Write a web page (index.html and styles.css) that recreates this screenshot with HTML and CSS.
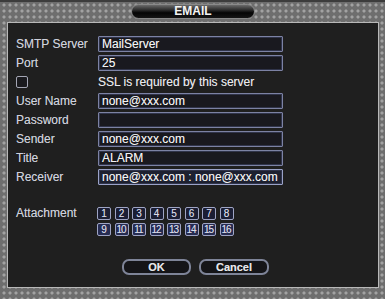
FILE: index.html
```html
<!DOCTYPE html>
<html>
<head>
<meta charset="utf-8">
<link rel="stylesheet" href="styles.css">
</head>
<body>
<div class="frame">
  <div class="tab">EMAIL</div>
  <div class="panel">
    <div class="form">
      <span class="label">SMTP Server</span><div class="field">MailServer</div>
      <span class="label">Port</span><div class="field">25</div>
      <span class="label"><span class="checkbox"></span></span><div class="note">SSL is required by this server</div>
      <span class="label">User Name</span><div class="field">none@xxx.com</div>
      <span class="label">Password</span><div class="field"></div>
      <span class="label">Sender</span><div class="field">none@xxx.com</div>
      <span class="label">Title</span><div class="field">ALARM</div>
      <span class="label">Receiver</span><div class="field active">none@xxx.com : none@xxx.com</div>
    </div>
    <div class="attach">
      <span class="attach-label">Attachment</span>
      <div class="channels">
        <div class="chrow">
          <span class="ch">1</span><span class="ch">2</span><span class="ch">3</span><span class="ch">4</span><span class="ch">5</span><span class="ch">6</span><span class="ch">7</span><span class="ch">8</span>
        </div>
        <div class="chrow sel">
          <span class="ch">9</span><span class="ch">10</span><span class="ch">11</span><span class="ch">12</span><span class="ch">13</span><span class="ch">14</span><span class="ch">15</span><span class="ch">16</span>
        </div>
      </div>
    </div>
    <div class="buttons">
      <span class="btn ok">OK</span><span class="btn cancel">Cancel</span>
    </div>
  </div>
</div>
</body>
</html>
```
FILE: styles.css
```css
html, body {
  margin: 0;
  padding: 0;
  background: #2a2a2a;
}
body {
  font-family: "Liberation Sans", Arial, sans-serif;
  font-size: 12px;
}
.frame {
  position: relative;
  box-sizing: border-box;
  width: 385px;
  height: 299px;
  padding: 20px 6px 10px 7px;
  border-top: 2px solid #3c3c3c;
  background-color: #6e6e6e;
  background-image: radial-gradient(circle, #a2a2a2 1.2px, rgba(162,162,162,0) 1.9px);
  background-size: 6px 6px;
  background-position: 1px 0px;
}
.tab {
  position: absolute;
  left: 131px;
  top: 2px;
  width: 124px;
  height: 15px;
  box-sizing: border-box;
  border-radius: 8px;
  border: 1px solid #8a8a8a;
  background: linear-gradient(#6a6a6a 0%, #2a2a2a 40%, #050505 60%, #151515 100%);
  color: #f4f4f4;
  font-weight: bold;
  font-size: 12px;
  line-height: 13px;
  text-align: center;
}
.panel {
  box-sizing: border-box;
  height: 266px;
  border: 1px solid #b8b8b8;
  background: #1f1f1f;
  padding: 13px 0 0 8px;
  text-shadow: 0 0 0.6px rgba(255,255,255,0.45);
}
.form {
  display: grid;
  grid-template-columns: 82px 185px;
  grid-auto-rows: 16px;
  row-gap: 3px;
}
.label {
  color: #cdd0dc;
  line-height: 16px;
  display: flex;
  align-items: center;
}
.checkbox {
  display: block;
  width: 10px;
  height: 10px;
  border: 1px solid #a4a6b4;
  border-radius: 2px;
  background: #1a1a1e;
}
.field {
  box-sizing: border-box;
  height: 16px;
  border: 1px solid #7c82a4;
  box-shadow: inset 0 0 0 1px #30344a;
  background: #19191f;
  color: #f2f2f2;
  line-height: 14px;
  padding-left: 3px;
  white-space: nowrap;
  overflow: hidden;
  border-radius: 1px;
}
.field.active {
  border-color: #9aa2c8;
  background: #1d2030;
}
.note {
  color: #e8e8ec;
  line-height: 16px;
  white-space: nowrap;
}
.attach {
  display: flex;
  margin-top: 22px;
  align-items: flex-start;
}
.attach-label {
  width: 81px;
  color: #cdd0dc;
  line-height: 13px;
}
.channels {
  display: flex;
  flex-direction: column;
  gap: 3px;
}
.chrow {
  display: flex;
  gap: 3.5px;
}
.ch {
  box-sizing: border-box;
  width: 14px;
  height: 13px;
  border: 1px solid #9ea4c4;
  border-radius: 2px;
  background: #1b1e34;
  color: #d8dae8;
  font-size: 10px;
  line-height: 11px;
  text-align: center;
  letter-spacing: -1px;
  text-indent: -1px;
  overflow: hidden;
}
.sel .ch {
  background: #262c52;
}
.buttons {
  display: flex;
  gap: 8px;
  margin-top: 23px;
  padding-left: 106px;
}
.btn {
  box-sizing: border-box;
  height: 16px;
  border: 2px solid #7e8498;
  border-radius: 7px;
  background: #151518;
  color: #e6e6ea;
  font-weight: bold;
  font-size: 11px;
  line-height: 12px;
  text-align: center;
}
.ok { width: 69px; }
.cancel { width: 70px; }
```
